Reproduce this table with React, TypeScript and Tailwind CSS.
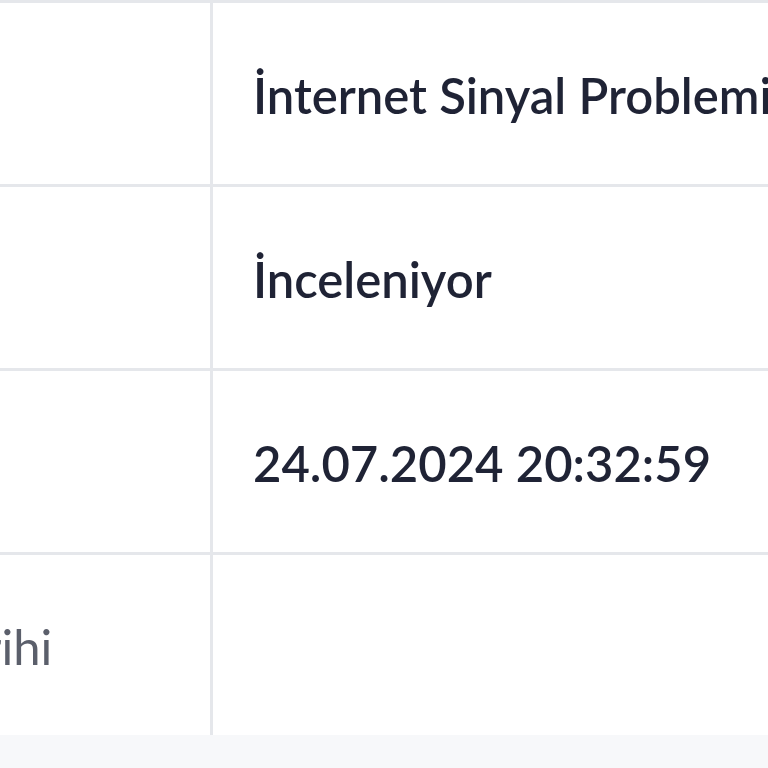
import React from "react";

const rows = [
  { label: "Konu", value: "İnternet Sinyal Problemi" },
  { label: "Durum", value: "İnceleniyor" },
  { label: "Açılış Tarihi", value: "24.07.2024 20:32:59" },
  { label: "Kapanış Tarihi", value: "" },
];

const App = () => {
  return (
    <div className="min-h-[768px] w-[768px] overflow-hidden bg-[#f7f8fa] font-['Lato','Noto_Sans',sans-serif]">
      <div className="ml-[-397px] w-[1400px] border-t-[3px] border-[#e5e7eb] bg-white">
        {rows.map((row, i) => (
          <div
            key={i}
            className={`flex ${i < rows.length - 1 ? "h-[184px] border-b-[3px] border-[#e5e7eb]" : "h-[180px]"}`}
          >
            <div className="flex w-[610px] shrink-0 items-center border-r-[3px] border-[#e5e7eb] pl-[153px] pt-[4px] text-[49px] text-[#5b5f6b]">
              <span className="whitespace-nowrap">{row.label}</span>
            </div>
            <div className="flex items-center whitespace-nowrap pl-[40px] pt-[4px] text-[49px] font-semibold text-[#1f2335]">
              {row.value}
            </div>
          </div>
        ))}
      </div>
    </div>
  );
};

export default App;
